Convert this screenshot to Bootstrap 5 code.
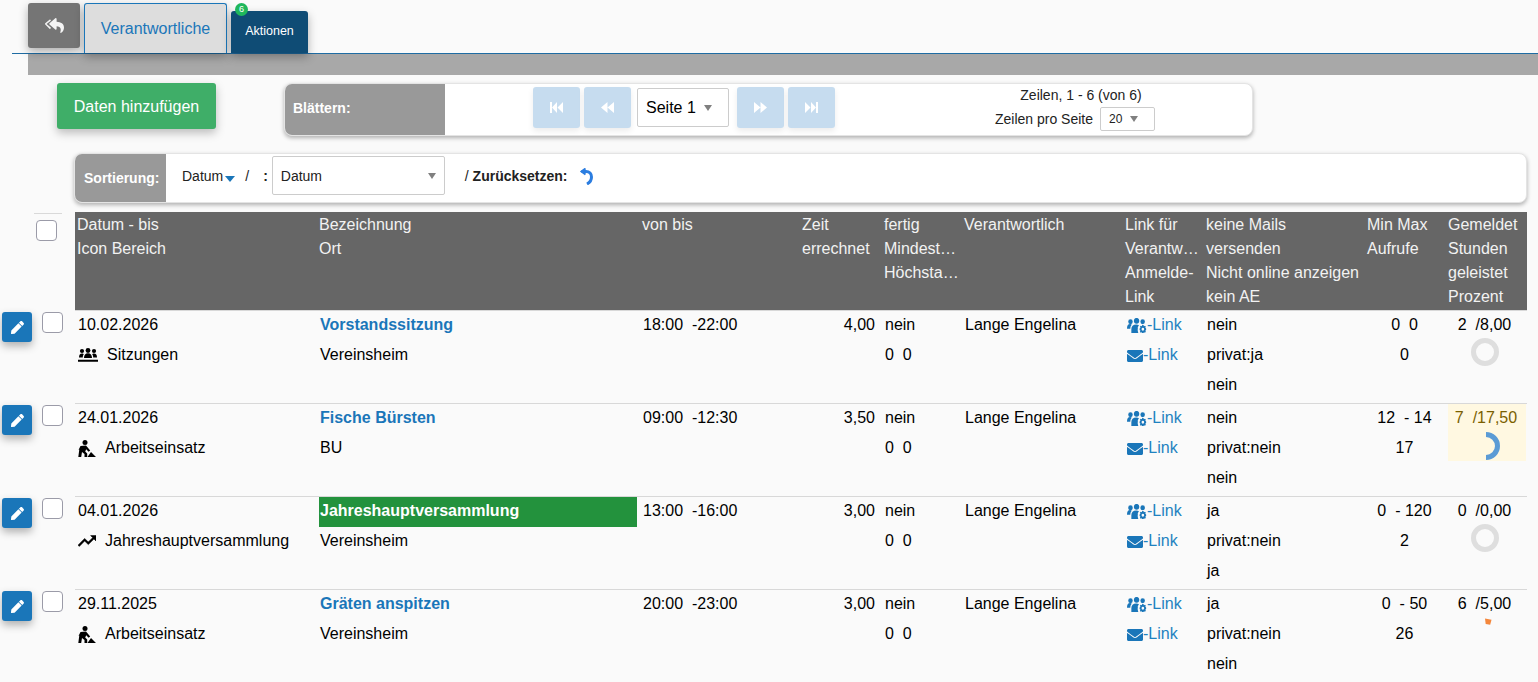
<!DOCTYPE html>
<html lang="de">
<head>
  <meta charset="UTF-8">
  <meta name="viewport" content="width=device-width, initial-scale=1.0">
  <title>Aktionen</title>
  <link href="https://cdn.jsdelivr.net/npm/bootstrap@5.3.0/dist/css/bootstrap.min.css" rel="stylesheet">
  <style>
    body { background: #fafafa; color: #000; font-family: "Liberation Sans", Arial, sans-serif; font-size: 16px; overflow: hidden; }

    /* tab strip */
    .tabstrip { height: 54px; margin-left: 12px; padding: 3px 0 0 16px; border-bottom: 1px solid #1f6ca3; }
    .backbtn { width: 52px; height: 45px; background: #757575; border-radius: 3px; box-shadow: 0 4px 10px rgba(0,0,0,.3); }
    .tab-main { width: 143px; height: 50px; margin-left: 4px; background: #ddd; color: #1a76b9; border: 1px solid #1a76b9; border-bottom: 0; border-radius: 3px 3px 0 0; box-shadow: 0 4px 10px rgba(0,0,0,.3); }
    .tab-act { position: relative; width: 77px; height: 42px; margin: 8px 0 0 4px; padding-bottom: 2px; background: #0f4c75; color: #fff; font-size: 12.500px; border-radius: 3px 3px 0 0; box-shadow: 0 4px 10px rgba(0,0,0,.3); }
    .tab-count { position: absolute; left: 4px; top: -8px; width: 13px; height: 13px; border-radius: 50%; background: #1fb75c; color: #fff; font-size: 9px; line-height: 13px; text-align: center; }
    .graybar { height: 21px; margin-left: 28px; background: #a8a8a8; }

    /* pager */
    .addbtn { width: 159px; height: 46px; margin: 8px 0 0 57px; padding-top: 8px; background: #3fae68; border: 0; border-radius: 3px; color: #fff; font-size: 16px; box-shadow: 0 4px 10px rgba(0,0,0,.25); }
    .addbtn:hover { background: #3fae68; color: #fff; }
    .pagerbar { width: 969px; height: 53px; margin: 8px 0 0 68px; background: #fff; border: 1px solid #e4e4e4; border-radius: 8px; box-shadow: 0 2px 4px rgba(0,0,0,.3); overflow: hidden; }
    .bar-label { background: #999; color: #fff; font-size: 14px; font-weight: 700; padding-left: 8px; }
    .pager-label { width: 160px; padding-bottom: 2px; }
    .pager-mid { margin-left: 88px; }
    .pagebtn { width: 47px; height: 41px; margin-top: 3px; background: #c6dcef; border-radius: 3px; box-shadow: 0 3px 6px rgba(0,0,0,.08); }
    .fakeselect { background: #fff; border: 1px solid #ccc; border-radius: 2px; }
    .caret-down { display: inline-block; width: 0; height: 0; border-left: 4px solid transparent; border-right: 4px solid transparent; border-top: 6px solid #808080; }
    .pageselect { width: 92px; height: 39px; margin: 4px 8px 0 6px; padding-left: 8px; }
    .pager-info { width: 260px; margin-left: 116px; margin-top: 1px; font-size: 14px; line-height: 20px; color: #222; }
    .pager-size { margin-top: 1px; padding-right: 12px; }
    .sizeselect { width: 55px; height: 24px; margin: 1px 0 0 7px; padding-left: 8px; font-size: 12px; }

    /* sort bar */
    .sortbar { height: 50px; margin: 17px 11px 0 74px; background: #fff; border: 1px solid #e4e4e4; border-radius: 8px; box-shadow: 0 2px 4px rgba(0,0,0,.3); overflow: hidden; font-size: 14px; color: #222; }
    .sort-label { width: 91px; padding-left: 9px; }
    .sort-keys { margin: 12px 0 0 16px; }
    .sort-arrow { margin: 4px 0 0 2px; }
    .sort-slash { margin-left: 10px; }
    .sort-colon { margin: 0 4px 0 14px; }
    .sortselect { width: 173px; height: 39px; margin-top: 2px; padding: 1px 8px 0; border-radius: 2px; }
    .sort-reset { margin: 12px 0 0 20px; }
    .reset-icon { margin-left: 11px; }

    /* list */
    .listwrap { margin-top: 9px; }
    .rowtable { table-layout: fixed; border-collapse: separate; border-spacing: 0; width: 1527px; margin: 0; --bs-table-bg: transparent; color: #000; }
    .rowtable col:nth-child(1) { width: 75px; }
    .rowtable col:nth-child(2) { width: 242px; }
    .rowtable col:nth-child(3) { width: 323px; }
    .rowtable col:nth-child(4) { width: 160px; }
    .rowtable col:nth-child(5) { width: 82px; }
    .rowtable col:nth-child(6) { width: 80px; }
    .rowtable col:nth-child(7) { width: 161px; }
    .rowtable col:nth-child(8) { width: 81px; }
    .rowtable col:nth-child(9) { width: 161px; }
    .rowtable col:nth-child(10) { width: 81px; }
    .rowtable col:nth-child(11) { width: 81px; }
    .rowtable > :not(caption) > * > * { padding: 0; border: 0; background: transparent; box-shadow: none; color: inherit; }
    .rowtable > thead > tr > th { height: 98px; background: #666; color: #f2f2f2; font-weight: 400; line-height: 24px; padding: 1px 0 0 2px; vertical-align: top; white-space: nowrap; overflow: hidden; }
    .rowtable > thead > tr > th.gutter { background: transparent; padding: 0; overflow: visible; }
    .rowtable > tbody > tr { height: 93px; }
    .rowtable > tbody > tr > td { box-shadow: inset 0 1px 0 #d8d8d8; vertical-align: top; padding-left: 3px; line-height: 30px; white-space: nowrap; }
    .rowtable > tbody > tr > td.gutter { box-shadow: none; padding: 2px 0 0 2px; }
    .headcheck { width: 28px; margin: 1px 0 0 34px; padding: 6px 0 0 2px; border-top: 1px solid #d9d9d9; }
    .pick { width: 21px; height: 21px; margin: 0; border: 1px solid #9b9ba8; border-radius: 3px; background-color: #fff; }
    .editbtn { width: 30px; height: 30px; padding: 0; margin-right: 10px; background: #1a76b9; border: 0; border-radius: 3px; box-shadow: 0 4px 8px rgba(0,0,0,.3); }
    .cat { height: 30px; gap: 9px; }
    .cat svg { flex: none; }
    .titlelink { font-weight: 700; color: #1a76b9; text-decoration: none; }
    .titlehit { background: #23923d; color: #fff; font-weight: 700; width: 318px; height: 30px; margin: 1px 0 -1px -1px; padding-left: 1px; line-height: 28px; }
    .linkcell a { color: #1f82c0; text-decoration: none; }
    .link-ico { margin-left: 1px; }
    .numcell { text-align: right; padding-right: 7px !important; }
    .midcell { text-align: center; padding: 0 2px 0 0 !important; }
    .hourscell { text-align: center; padding: 0 4px 0 0 !important; }
    .hourswarn { background: #fff8e1; color: #7a6000; height: 57px; width: 78px; margin: 1px 0 0 2px; padding-right: 2px; line-height: 28px; }
    .ringbox { height: 30px; margin-top: -3px; }
    .hourswarn .ringbox { margin-top: -1px; }
  </style>
</head>
<body>

  <!-- Tabs -->
  <div class="tabstrip d-flex align-items-start">
    <div class="backbtn d-flex align-items-center justify-content-center">
      <svg width="19" height="17" viewBox="0 0 576 512" fill="#f4f4f4"><path d="M136.300 189.800L312.300 37.900C327.700 24.500 352 35.300 352 56v82.800c129.200 10.200 224 52.200 224 183.500 0 61.400-39.600 122.300-83.300 154.100-13.700 9.900-33.100-2.500-28.100-18.600 38.500-123.200-3.900-169.500-112.600-182v84.200c0 20.700-24.300 31.500-39.700 18.200l-176-152c-11.100-9.600-11.100-26.800 0-36.400z"/><path d="M8.300 189.800L136.300 79.300c15.400-13.300 39.700-2.500 39.700 18.200v16L48.300 208 176 318.500v15.900c0 20.700-24.300 31.500-39.700 18.200L8.300 226.200c-11-9.600-11-26.800 0-36.400z"/></svg>
    </div>
    <div class="tab-main d-flex align-items-center justify-content-center">Verantwortliche</div>
    <div class="tab-act d-flex align-items-center justify-content-center">
      <span class="tab-count">6</span>Aktionen
    </div>
  </div>
  <div class="graybar"></div>

  <!-- Add button and pager -->
  <div class="d-flex align-items-start">
    <button class="btn addbtn" type="button">Daten hinzufügen</button>
    <div class="pagerbar d-flex">
      <div class="bar-label pager-label d-flex align-items-center">Blättern:</div>
      <div class="pager-mid d-flex align-items-start">
        <div class="pagebtn d-flex align-items-center justify-content-center">
          <svg width="13" height="11" viewBox="0 0 13 11" fill="#fff"><path d="M0 0h2v11H0zM2 5.500L7 0v11zM7.500 5.500L13 0v11z"/></svg>
        </div>
        <div class="pagebtn ms-1 d-flex align-items-center justify-content-center">
          <svg width="13" height="11" viewBox="0 0 13 11" fill="#fff"><path d="M0 5.500L6.500 0v11zM6.500 5.500L13 0v11z"/></svg>
        </div>
        <div class="fakeselect pageselect d-flex align-items-center gap-2">Seite 1 <span class="caret-down"></span></div>
        <div class="pagebtn d-flex align-items-center justify-content-center">
          <svg width="13" height="11" viewBox="0 0 13 11" fill="#fff"><path d="M0 0l6.500 5.500L0 11zM6.500 0L13 5.500 6.500 11z"/></svg>
        </div>
        <div class="pagebtn ms-1 d-flex align-items-center justify-content-center">
          <svg width="13" height="11" viewBox="0 0 13 11" fill="#fff"><path d="M0 0l5.500 5.500L0 11zM6 0l5 5.500L6 11zM11 0h2v11h-2z"/></svg>
        </div>
      </div>
      <div class="pager-info text-center">
        <div>Zeilen, 1 - 6 (von 6)</div>
        <div class="pager-size d-flex align-items-center justify-content-center">
          <span>Zeilen pro Seite</span>
          <span class="fakeselect sizeselect d-flex align-items-center gap-2">20 <span class="caret-down"></span></span>
        </div>
      </div>
    </div>
  </div>

  <!-- Sorting -->
  <div class="sortbar d-flex">
    <div class="bar-label sort-label d-flex align-items-center">Sortierung:</div>
    <div class="d-flex align-items-start flex-grow-1">
      <span class="sort-keys d-flex align-items-center">Datum
        <svg class="sort-arrow" width="10" height="6" viewBox="0 0 10 6" fill="#1a76b9"><path d="M0 0h10L5 6z"/></svg>
        <span class="sort-slash">/</span><span class="sort-colon fw-bold">:</span>
      </span>
      <div class="fakeselect sortselect d-flex align-items-center justify-content-between">Datum <span class="caret-down"></span></div>
      <span class="sort-reset d-flex align-items-center">/&nbsp;<b>Zurücksetzen:</b>
        <svg class="reset-icon" width="15" height="17" viewBox="0 0 15 17" fill="none" stroke="#2b7de0" stroke-width="3"><path d="M2.500 3.500h4.500c3.500 0 5.500 2.500 5.500 5.500 0 3-1.600 5.500-4.500 7"/><path d="M6.500 .5L2.500 3.500l4 3" stroke-width="2"/></svg>
      </span>
    </div>
  </div>

  <!-- List -->
  <div class="listwrap">
    <table class="table rowtable">
      <colgroup>
        <col><col><col><col><col><col><col><col><col><col><col>
      </colgroup>
      <thead>
        <tr>
          <th class="gutter"><div class="headcheck"><input class="form-check-input pick d-block" type="checkbox"></div></th>
          <th>Datum - bis<br>Icon Bereich</th>
          <th>Bezeichnung<br>Ort</th>
          <th>von bis</th>
          <th>Zeit<br>errechnet</th>
          <th>fertig<br>Mindest…<br>Höchsta…</th>
          <th>Verantwortlich</th>
          <th>Link für<br>Verantw…<br>Anmelde-<br>Link</th>
          <th>keine Mails<br>versenden<br>Nicht online anzeigen<br>kein AE</th>
          <th>Min Max<br>Aufrufe</th>
          <th>Gemeldet<br>Stunden<br>geleistet<br>Prozent</th>
        </tr>
      </thead>
      <tbody>
        <tr>
          <td class="gutter"><div class="d-flex align-items-start">
            <button class="btn editbtn d-flex align-items-center justify-content-center" type="button"><svg width="13" height="13" viewBox="0 0 512 512" fill="#fff"><use href="#penIcon"/></svg></button>
            <input class="form-check-input pick" type="checkbox"></div></td>
          <td>10.02.2026
            <div class="cat d-flex align-items-center">
              <svg width="20" height="15" viewBox="0 0 20 15" fill="#000"><circle cx="4" cy="3" r="2.100"/><circle cx="10" cy="2.500" r="2.400"/><circle cx="16" cy="3" r="2.100"/><path d="M1 9.500c0-2.700 1-3.900 3-3.900 1 0 1.400.3 1.800.6C5 7 4.800 8.500 4.800 9.500zM6 10c0-2.800 1.500-4.800 4-4.800s4 2 4 4.800zM15.200 9.500c0-1-.2-2.500-1-3.300.4-.3.8-.6 1.800-.6 2 0 3 1.200 3 3.900zM0 11.800h20v2H0z"/></svg>
              <span>Sitzungen</span>
            </div>
          </td>
          <td><a class="titlelink" href="#">Vorstandssitzung</a><div>Vereinsheim</div></td>
          <td>18:00&nbsp; -22:00</td>
          <td class="numcell">4,00</td>
          <td>nein<div>0&nbsp; 0</div></td>
          <td>Lange Engelina</td>
          <td class="linkcell">
            <a href="#"><svg class="link-ico" width="20" height="15" viewBox="0 0 23 16" preserveAspectRatio="none" fill="#1a76b9"><use href="#usersCog"/></svg>-Link</a>
            <div><a href="#"><svg class="link-ico" width="16" height="16" viewBox="0 0 512 512" fill="#1a76b9"><use href="#mailIcon"/></svg>-Link</a></div>
          </td>
          <td>nein<div>privat:ja</div><div>nein</div></td>
          <td class="midcell">0&nbsp; 0<div>0</div></td>
          <td class="hourscell">2&nbsp; /8,00
            <div class="ringbox d-flex justify-content-center"><svg width="30" height="30" viewBox="0 0 30 30"><circle cx="15" cy="15" r="11.500" fill="none" stroke="#dedede" stroke-width="5"/></svg></div>
          </td>
        </tr>
        <tr>
          <td class="gutter"><div class="d-flex align-items-start">
            <button class="btn editbtn d-flex align-items-center justify-content-center" type="button"><svg width="13" height="13" viewBox="0 0 512 512" fill="#fff"><use href="#penIcon"/></svg></button>
            <input class="form-check-input pick" type="checkbox"></div></td>
          <td>24.01.2026
            <div class="cat d-flex align-items-center">
              <svg width="18" height="17" viewBox="0 0 18 17" fill="#000"><use href="#digIcon"/></svg>
              <span>Arbeitseinsatz</span>
            </div>
          </td>
          <td><a class="titlelink" href="#">Fische Bürsten</a><div>BU</div></td>
          <td>09:00&nbsp; -12:30</td>
          <td class="numcell">3,50</td>
          <td>nein<div>0&nbsp; 0</div></td>
          <td>Lange Engelina</td>
          <td class="linkcell">
            <a href="#"><svg class="link-ico" width="20" height="15" viewBox="0 0 23 16" preserveAspectRatio="none" fill="#1a76b9"><use href="#usersCog"/></svg>-Link</a>
            <div><a href="#"><svg class="link-ico" width="16" height="16" viewBox="0 0 512 512" fill="#1a76b9"><use href="#mailIcon"/></svg>-Link</a></div>
          </td>
          <td>nein<div>privat:nein</div><div>nein</div></td>
          <td class="midcell">12&nbsp; - 14<div>17</div></td>
          <td class="hourscell"><div class="hourswarn">7&nbsp; /17,50
            <div class="ringbox d-flex justify-content-center"><svg width="30" height="30" viewBox="0 0 30 30"><path d="M15 3.500a11.500 11.500 0 0 1 0 23" fill="none" stroke="#5b9bd5" stroke-width="5"/></svg></div></div>
          </td>
        </tr>
        <tr>
          <td class="gutter"><div class="d-flex align-items-start">
            <button class="btn editbtn d-flex align-items-center justify-content-center" type="button"><svg width="13" height="13" viewBox="0 0 512 512" fill="#fff"><use href="#penIcon"/></svg></button>
            <input class="form-check-input pick" type="checkbox"></div></td>
          <td>04.01.2026
            <div class="cat d-flex align-items-center">
              <svg width="18" height="18" viewBox="2 4 20 16" fill="#000" stroke="#000" stroke-width=".6"><path d="M16 6l2.290 2.290-4.880 4.880-4-4L2 16.590 3.410 18l6-6 4 4 6.300-6.290L22 12V6z"/></svg>
              <span>Jahreshauptversammlung</span>
            </div>
          </td>
          <td><div class="titlehit">Jahreshauptversammlung</div><div>Vereinsheim</div></td>
          <td>13:00&nbsp; -16:00</td>
          <td class="numcell">3,00</td>
          <td>nein<div>0&nbsp; 0</div></td>
          <td>Lange Engelina</td>
          <td class="linkcell">
            <a href="#"><svg class="link-ico" width="20" height="15" viewBox="0 0 23 16" preserveAspectRatio="none" fill="#1a76b9"><use href="#usersCog"/></svg>-Link</a>
            <div><a href="#"><svg class="link-ico" width="16" height="16" viewBox="0 0 512 512" fill="#1a76b9"><use href="#mailIcon"/></svg>-Link</a></div>
          </td>
          <td>ja<div>privat:nein</div><div>ja</div></td>
          <td class="midcell">0&nbsp; - 120<div>2</div></td>
          <td class="hourscell">0&nbsp; /0,00
            <div class="ringbox d-flex justify-content-center"><svg width="30" height="30" viewBox="0 0 30 30"><circle cx="15" cy="15" r="11.500" fill="none" stroke="#dedede" stroke-width="5"/></svg></div>
          </td>
        </tr>
        <tr>
          <td class="gutter"><div class="d-flex align-items-start">
            <button class="btn editbtn d-flex align-items-center justify-content-center" type="button"><svg width="13" height="13" viewBox="0 0 512 512" fill="#fff"><use href="#penIcon"/></svg></button>
            <input class="form-check-input pick" type="checkbox"></div></td>
          <td>29.11.2025
            <div class="cat d-flex align-items-center">
              <svg width="18" height="17" viewBox="0 0 18 17" fill="#000"><use href="#digIcon"/></svg>
              <span>Arbeitseinsatz</span>
            </div>
          </td>
          <td><a class="titlelink" href="#">Gräten anspitzen</a><div>Vereinsheim</div></td>
          <td>20:00&nbsp; -23:00</td>
          <td class="numcell">3,00</td>
          <td>nein<div>0&nbsp; 0</div></td>
          <td>Lange Engelina</td>
          <td class="linkcell">
            <a href="#"><svg class="link-ico" width="20" height="15" viewBox="0 0 23 16" preserveAspectRatio="none" fill="#1a76b9"><use href="#usersCog"/></svg>-Link</a>
            <div><a href="#"><svg class="link-ico" width="16" height="16" viewBox="0 0 512 512" fill="#1a76b9"><use href="#mailIcon"/></svg>-Link</a></div>
          </td>
          <td>ja<div>privat:nein</div><div>nein</div></td>
          <td class="midcell">0&nbsp; - 50<div>26</div></td>
          <td class="hourscell">6&nbsp; /5,00
            <div class="ringbox d-flex justify-content-center"><svg width="30" height="30" viewBox="0 0 30 30"><path d="M15 2.500l6.500 1.200-1.300 5-4.500-.8z" fill="#f4873c"/></svg></div>
          </td>
        </tr>
      </tbody>
    </table>
  </div>

  <!-- shared icons -->
  <svg width="0" height="0" class="d-block">
    <defs>
      <path id="penIcon" d="M290.740 93.240l128.020 128.020-277.990 277.990-114.140 12.600C11.350 513.540-1.560 500.620.14 485.340l12.700-114.220 277.900-277.880zm207.200-19.060l-60.110-60.110c-18.750-18.750-49.160-18.750-67.910 0l-56.550 56.550 128.020 128.020 56.550-56.550c18.750-18.760 18.750-49.160 0-67.910z"/>
      <g id="usersCog">
        <circle cx="4" cy="4" r="2.600"/><circle cx="11" cy="3" r="3.100"/><circle cx="18" cy="4" r="2.600"/>
        <path d="M0 11.500c0-3.200 1-5 3.500-5 1 0 1.500.3 2 .7C4.500 8 3.800 9.500 3.800 11.500zM5 16v-4c0-3 2-5 5.500-5 1.500 0 2.500.3 3.300.8-1 1.200-1.800 2.200-1.300 3.700-.5 1 0 3 .5 4.500z"/>
        <path d="M17.500 7.500l1.500 0 .4 1.300 1.300-.5 1 1-.7 1.200 1 .8v1.400l-1 .8.7 1.200-1 1-1.300-.5-.4 1.300h-1.500l-.4-1.300-1.300.5-1-1 .7-1.200-1-.8v-1.400l1-.8-.7-1.200 1-1 1.300.5zM18.250 10.500a1.500 1.500 0 1 0 0 3 1.500 1.500 0 0 0 0-3z" fill-rule="evenodd"/>
      </g>
      <path id="mailIcon" d="M502.300 190.800c3.900-3.100 9.700-.2 9.700 4.700V400c0 26.500-21.500 48-48 48H48c-26.500 0-48-21.500-48-48V195.600c0-5 5.700-7.800 9.700-4.700 22.400 17.400 52.100 39.500 154.100 113.600 21.100 15.400 56.700 47.800 92.200 47.600 35.700.3 72-32.800 92.300-47.600 102-74.100 131.600-96.300 154-113.700zM256 320c23.200.4 56.600-29.200 73.400-41.400 132.700-96.300 142.800-104.700 173.400-128.700 5.800-4.500 9.200-11.500 9.200-18.900v-19c0-26.500-21.500-48-48-48H48C21.500 64 0 85.500 0 112v19c0 7.400 3.400 14.300 9.200 18.900 30.600 23.900 40.700 32.400 173.400 128.700 16.800 12.200 50.200 41.800 73.400 41.400z"/>
      <g id="digIcon">
        <circle cx="7" cy="2.600" r="2.500"/>
        <path d="M2.500 6l5.500-.5 4.200 5-1.600 1.300-2.400-2.600-1 2.200 2 2V17H6.500v-3L4 12l-.8 5H.3l1-7.500L.5 10zM9.500 17l3.500-5 5 5z"/>
      </g>
    </defs>
  </svg>

  <script src="https://cdn.jsdelivr.net/npm/bootstrap@5.3.0/dist/js/bootstrap.bundle.min.js"></script>
</body>
</html>
